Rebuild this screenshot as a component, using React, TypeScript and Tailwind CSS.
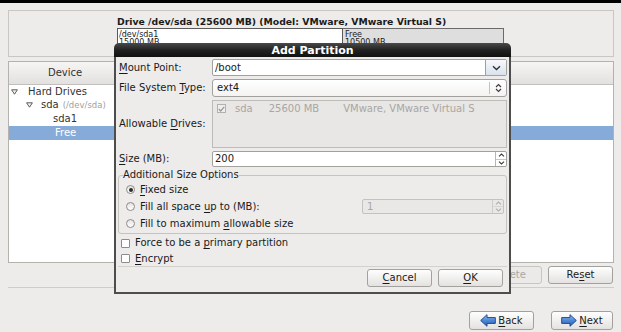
import React from "react";

function U({ c }: { c: string }) {
  return <span className="underline decoration-1 underline-offset-[1.5px]">{c}</span>;
}

const btn =
  "h-full flex items-center justify-center rounded-[3px] border border-[#a3a19e] bg-linear-to-b from-[#fefefe] to-[#e3e2e0] text-[10px] text-[#1a1a1a]";

function ArrowIcon({ dir }: { dir: "left" | "right" }) {
  const pts =
    dir === "left"
      ? "0.7,6.5 7,0.7 7,3.6 15.3,3.6 15.3,9.4 7,9.4 7,12.3"
      : "15.3,6.5 9,0.7 9,3.6 0.7,3.6 0.7,9.4 9,9.4 9,12.3";
  return (
    <svg width="16" height="13" viewBox="0 0 16 13">
      <defs>
        <linearGradient id={`ag-${dir}`} x1="0" y1="0" x2="0" y2="1">
          <stop offset="0" stopColor="#9cc3f2" />
          <stop offset="0.5" stopColor="#4d86d6" />
          <stop offset="1" stopColor="#2a60ae" />
        </linearGradient>
      </defs>
      <polygon points={pts} fill={`url(#ag-${dir})`} stroke="#1d4a8c" strokeWidth="1" strokeLinejoin="round" />
    </svg>
  );
}

function ChevDown() {
  return (
    <svg width="9" height="6" viewBox="0 0 9 6">
      <polyline points="1,1.2 4.5,4.5 8,1.2" fill="none" stroke="#2d2d2d" strokeWidth="1.3" />
    </svg>
  );
}

function UpDown({ color = "#3a3a3a" }: { color?: string }) {
  return (
    <svg width="7" height="10" viewBox="0 0 7 10">
      <polyline points="1,4 3.5,1.5 6,4" fill="none" stroke={color} strokeWidth="1.1" />
      <polyline points="1,6 3.5,8.5 6,6" fill="none" stroke={color} strokeWidth="1.1" />
    </svg>
  );
}

function Spin({ disabled }: { disabled?: boolean }) {
  const c = disabled ? "#b0b0b0" : "#3a3a3a";
  return (
    <div className={`flex flex-col h-full w-[11px] border-l ${disabled ? "border-[#cfcdca]" : "border-[#b8b6b3]"}`}>
      <div className={`flex-1 flex items-center justify-center border-b ${disabled ? "border-[#d8d6d3]" : "border-[#c8c6c3]"}`}>
        <svg width="7" height="4" viewBox="0 0 7 4">
          <polyline points="1,3.3 3.5,1 6,3.3" fill="none" stroke={c} strokeWidth="1.1" />
        </svg>
      </div>
      <div className="flex-1 flex items-center justify-center">
        <svg width="7" height="4" viewBox="0 0 7 4">
          <polyline points="1,0.7 3.5,3 6,0.7" fill="none" stroke={c} strokeWidth="1.1" />
        </svg>
      </div>
    </div>
  );
}

function Expander() {
  return (
    <svg width="7" height="6" viewBox="0 0 7 6">
      <polygon points="0.6,0.8 6.4,0.8 3.5,5.2" fill="#f4f4f4" stroke="#4a4a4a" strokeWidth="0.9" strokeLinejoin="round" />
    </svg>
  );
}

function Radio({ on }: { on?: boolean }) {
  return (
    <div className="w-[9px] h-[9px] rounded-full border border-[#8e8c89] bg-linear-to-b from-[#e4e3e1] to-white flex items-center justify-center">
      {on && <div className="w-[4px] h-[4px] rounded-full bg-[#2b2b2b]" />}
    </div>
  );
}

function Check() {
  return <div className="w-[9px] h-[9px] border border-[#8e8c89] bg-white rounded-[1px]" />;
}

export default function App() {
  return (
    <div className="w-[621px] h-[332px] bg-[#edeceb] relative overflow-hidden font-['DejaVu_Sans',sans-serif] text-[10px] leading-none text-[#1a1a1a]">
      <div className="h-[3px] bg-black" />
      <div className="pl-[8px] pr-[7px] pt-[7px] flex flex-col">
        {/* drive frame */}
        <div className="h-[47px] border border-[#c9c7c4] pl-[108px] pt-[5px]">
          <div className="text-[9.3px] leading-[11px] font-bold text-[#1a1a1a] whitespace-nowrap">
            Drive /dev/sda (25600 MB) (Model: VMware, VMware Virtual S)
          </div>
          <div className="mt-[1px] flex h-[20px] w-[387px] text-[8px] leading-[8px] text-[#222]">
            <div className="w-[226px] h-full border border-[#5a5a5a] bg-white pl-[1px] pt-[2px]">
              <div>/dev/sda1</div>
              <div>15000 MB</div>
            </div>
            <div className="flex-1 h-full border border-l-0 border-[#6a6a6a] bg-[#dedede] pl-[2px] pt-[2px]">
              <div>Free</div>
              <div>10500 MB</div>
            </div>
          </div>
        </div>

        {/* device list */}
        <div className="mt-[4px] h-[202px] border border-[#b4b2af] bg-white flex flex-col">
          <div className="h-[23px] border-b border-[#c2c0bd] bg-linear-to-b from-[#f6f5f4] to-[#e2e1df] flex items-center">
            <div className="w-[108px] pl-[39px] text-[#333]">Device</div>
          </div>
          <div className="flex flex-col text-[#333]">
            <div className="h-[13px] flex items-center pl-[2px]">
              <Expander />
              <span className="ml-[10px]">Hard Drives</span>
            </div>
            <div className="h-[14px] flex items-center pl-[17px]">
              <Expander />
              <span className="ml-[8px]">sda</span>
              <span className="ml-[4px] text-[8.5px] text-[#a0a0a0]">(/dev/sda)</span>
            </div>
            <div className="h-[14px] flex items-center pl-[44px]">sda1</div>
            <div className="h-[14px] flex items-center pl-[46px] bg-[#86abd9] text-white">Free</div>
          </div>
        </div>

        {/* list buttons */}
        <div className="mt-[3px] h-[18px] flex justify-end gap-[6px] pr-[1px]">
          <div className="h-full w-[65px] flex items-center justify-center rounded-[3px] border border-[#c8c6c3] bg-[#eceae8] text-[#a9a7a4]">
            <U c="D" />elete
          </div>
          <div className={`${btn} w-[65px]`}>
            Re<U c="s" />et
          </div>
        </div>

        <div className="mt-[3px] border-t border-[#cfcdca]" />

        <div className="mt-[23px] h-[19px] flex justify-end gap-[17px] pr-[1px]">
          <div className={`${btn} w-[65px] gap-[2px]`}>
            <ArrowIcon dir="left" />
            <span>
              <U c="B" />ack
            </span>
          </div>
          <div className={`${btn} w-[62px] gap-[2px]`}>
            <ArrowIcon dir="right" />
            <span>
              <U c="N" />ext
            </span>
          </div>
        </div>
      </div>

      {/* Add Partition dialog */}
      <div className="absolute left-[114px] top-[43px] w-[397px] h-[251px] flex flex-col">
        <div className="h-[14px] rounded-t-[5px] bg-linear-to-b from-[#4a4a4a] via-[#222] to-[#111] flex items-center justify-center text-white text-[11px] font-bold">
          Add Partition
        </div>
        <div className="flex-1 border-x-2 border-b-2 border-[#4d4d4d] bg-[#edeceb] px-[2px] flex flex-col">
          {/* Mount point */}
          <div className="mt-[2px] h-[17px] flex items-center">
            <div className="w-[94px] pl-[1px]">
              <U c="M" />ount Point:
            </div>
            <div className="flex-1 h-full flex border border-[#a3a19e] rounded-[2px] bg-white">
              <div className="flex-1 flex items-center pl-[2px]">/boot</div>
              <div className="w-[21px] flex items-center justify-center border-l border-[#8aa3c2] bg-linear-to-b from-[#f7f9fc] to-[#d9e2ee] rounded-r-[1px]">
                <ChevDown />
              </div>
            </div>
          </div>

          {/* File system type */}
          <div className="mt-[3px] h-[18px] flex items-center">
            <div className="w-[94px] pl-[1px]">
              File System <U c="T" />ype:
            </div>
            <div className="flex-1 h-full flex items-center border border-[#a3a19e] rounded-[3px] bg-linear-to-b from-white to-[#f4f3f2]">
              <div className="flex-1 pl-[4px]">ext4</div>
              <div className="h-[12px] border-l border-[#c4c2bf]" />
              <div className="w-[16px] flex items-center justify-center">
                <UpDown />
              </div>
            </div>
          </div>

          {/* Allowable drives */}
          <div className="mt-[3px] h-[48px] flex items-center">
            <div className="w-[94px] pl-[1px]">
              Allowable <U c="D" />rives:
            </div>
            <div className="flex-1 h-full border border-[#bdbbb8] bg-[#e8e7e5] pl-[4px] pt-[3px]">
              <div className="flex items-center h-[9px] text-[#a8a6a3]">
                <div className="w-[9px] h-[9px] border border-[#b3b1ae] bg-[#efeeec] flex items-center justify-center">
                  <svg width="7" height="6" viewBox="0 0 7 6">
                    <polyline points="0.8,3 2.7,5 6.2,0.8" fill="none" stroke="#9a9896" strokeWidth="1.2" />
                  </svg>
                </div>
                <span className="ml-[9px]">sda</span>
                <span className="ml-[16px]">25600 MB</span>
                <span className="ml-[24px] whitespace-nowrap">VMware, VMware Virtual S</span>
              </div>
            </div>
          </div>

          {/* Size */}
          <div className="mt-[3px] h-[16px] flex items-center">
            <div className="w-[94px] pl-[1px]">
              <U c="S" />ize (MB):
            </div>
            <div className="flex-1 h-full flex border border-[#a3a19e] rounded-[2px] bg-white">
              <div className="flex-1 flex items-center pl-[2px]">200</div>
              <Spin />
            </div>
          </div>

          {/* Additional size options */}
          <fieldset className="mt-[2px] h-[65px] border border-[#c6c4c1] rounded-[3px] pl-[4px] pr-[2px]">
            <legend className="leading-[12px] text-[#1a1a1a]">Additional Size Options</legend>
            <div className="h-[17px] flex items-center ml-[3px]">
              <Radio on />
              <span className="ml-[5px]">
                <U c="F" />ixed size
              </span>
            </div>
            <div className="h-[17px] flex items-center ml-[3px]">
              <Radio />
              <span className="ml-[5px]">
                Fill all space <U c="u" />p to (MB):
              </span>
              <div className="ml-auto w-[142px] h-[15px] flex border border-[#c4c2bf] rounded-[2px] bg-[#e9e8e6]">
                <div className="flex-1 flex items-center pl-[4px] text-[#a8a6a3]">1</div>
                <Spin disabled />
              </div>
            </div>
            <div className="h-[17px] flex items-center ml-[3px]">
              <Radio />
              <span className="ml-[5px]">
                Fill to maximum <U c="a" />llowable size
              </span>
            </div>
          </fieldset>

          <div className="mt-[1px] h-[16px] flex items-center ml-[3px]">
            <Check />
            <span className="ml-[5px]">
              Force to be a <U c="p" />rimary partition
            </span>
          </div>
          <div className="h-[15px] flex items-center ml-[3px]">
            <Check />
            <span className="ml-[5px]">
              <U c="E" />ncrypt
            </span>
          </div>
          <div className="border-t border-[#d3d1ce]" />

          <div className="mt-[2px] h-[18px] flex justify-end gap-[6px] pr-[4px]">
            <div className={`${btn} w-[65px]`}>
              <U c="C" />ancel
            </div>
            <div className={`${btn} w-[65px]`}>
              <U c="O" />K
            </div>
          </div>
        </div>
      </div>
    </div>
  );
}
